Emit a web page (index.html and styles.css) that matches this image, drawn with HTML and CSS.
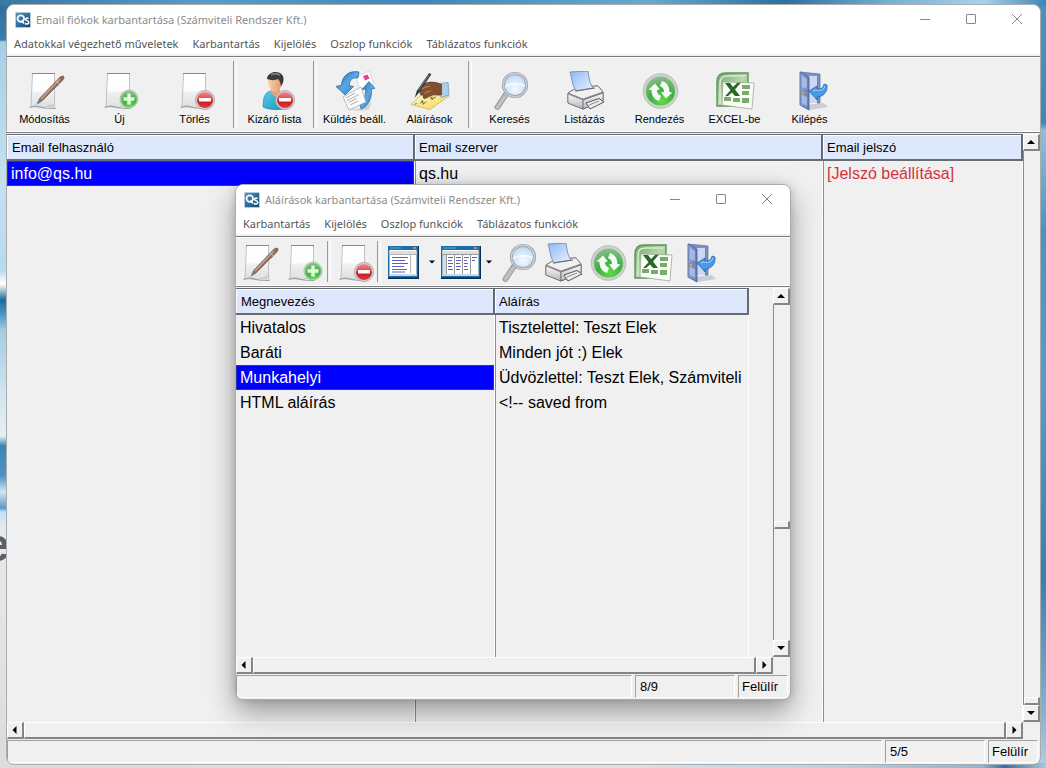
FILE: index.html
```html
<!DOCTYPE html>
<html lang="hu">
<head>
<meta charset="utf-8">
<meta name="viewport" content="width=device-width, initial-scale=1">
<title>Email fiókok karbantartása</title>
<link rel="stylesheet" href="styles.css">
</head>
<body>
<svg class="sprite" aria-hidden="true">
  <defs>
    <linearGradient id="g-page" x1="0" y1="0" x2="0" y2="1"><stop offset="0" stop-color="#fff"/><stop offset=".5" stop-color="#fdfdfd"/><stop offset=".55" stop-color="#f0f1f1"/><stop offset="1" stop-color="#dcdfe0"/></linearGradient>
    <linearGradient id="g-red" x1="0" y1="0" x2="0" y2="1"><stop offset="0" stop-color="#f08a8e"/><stop offset=".48" stop-color="#df3f47"/><stop offset=".52" stop-color="#cb1420"/><stop offset="1" stop-color="#e03a40"/></linearGradient>
    <radialGradient id="g-green" cx=".55" cy=".85" r=".85"><stop offset="0" stop-color="#5fdc4a"/><stop offset=".5" stop-color="#3fae40"/><stop offset="1" stop-color="#8fbf92"/></radialGradient>
    <linearGradient id="g-blue" x1="0" y1="0" x2="1" y2="1"><stop offset="0" stop-color="#1d67ad"/><stop offset=".5" stop-color="#5aa8e6"/><stop offset="1" stop-color="#2b76bd"/></linearGradient>
    <linearGradient id="g-shirt" x1="0" y1="0" x2="1" y2="1"><stop offset="0" stop-color="#58cbe8"/><stop offset="1" stop-color="#1791b8"/></linearGradient>
    <linearGradient id="g-skin" x1="0" y1="0" x2="1" y2="0"><stop offset="0" stop-color="#fbd3b0"/><stop offset="1" stop-color="#d99468"/></linearGradient>
    <radialGradient id="g-lens" cx=".5" cy=".65" r=".65"><stop offset="0" stop-color="#f4faff"/><stop offset="1" stop-color="#b9d6f5"/></radialGradient>
    <linearGradient id="g-sheet" x1="0" y1="0" x2="1" y2="1"><stop offset="0" stop-color="#8fb8f2"/><stop offset="1" stop-color="#eaf3ff"/></linearGradient>
    <linearGradient id="g-metal" x1="0" y1="0" x2="0" y2="1"><stop offset="0" stop-color="#fafafa"/><stop offset="1" stop-color="#b6b6ba"/></linearGradient>
    <linearGradient id="g-excel" x1="0" y1="0" x2="1" y2="1"><stop offset="0" stop-color="#6ea466"/><stop offset=".5" stop-color="#b7d8ad"/><stop offset="1" stop-color="#74a968"/></linearGradient>
    <linearGradient id="g-door" x1="0" y1="0" x2="1" y2="0"><stop offset="0" stop-color="#93a8d8"/><stop offset="1" stop-color="#5f7bba"/></linearGradient>
    <linearGradient id="g-note" x1="0" y1="0" x2="1" y2="1"><stop offset="0" stop-color="#fffbd0"/><stop offset="1" stop-color="#f3d44a"/></linearGradient>
    <linearGradient id="g-logo" x1="0" y1="0" x2="1" y2="1"><stop offset="0" stop-color="#4f9bc4"/><stop offset="1" stop-color="#0c4470"/></linearGradient>
  </defs>
  <symbol id="i-logo" viewBox="0 0 16 16">
    <rect x=".5" y=".5" width="15" height="15" rx="1" fill="url(#g-logo)" stroke="#b9cad6"/>
    <circle cx="5.8" cy="6.6" r="3.3" fill="none" stroke="#fff" stroke-width="1.700"/>
    <path d="M6.500 8.500l2.500 3" stroke="#fff" stroke-width="1.600"/>
    <path d="M13.600 6.600c-1.500-.9-3.200-.5-3.100.8.2 1.500 3.300 1 3.300 3 0 1.700-2.300 2-3.900 1.100" fill="none" stroke="#fff" stroke-width="1.500"/>
  </symbol>
  <symbol id="i-page" viewBox="0 0 40 40">
    <path d="M4.500 36l3-3V3h22v29l1.500 5-9-1.500z" fill="#c8cccf" opacity=".7"/>
    <path d="M7.500 2.500h22v31L19 36.500 6 35.500z" fill="url(#g-page)" stroke="#b3b7ba" stroke-width=".8"/>
    <path d="M7 2.500h23" stroke="#7e8284" stroke-width=".9"/>
    <path d="M4.500 36.500l6-1.500 9 2 11 .5" stroke="#989c9e" stroke-width="1.200" fill="none"/>
  </symbol>
  <symbol id="i-minus" viewBox="0 0 40 40">
    <circle cx="30" cy="29" r="9.500" fill="#d8d8d8" stroke="#9c9c9c" stroke-width=".8"/>
    <circle cx="30" cy="29" r="8" fill="url(#g-red)"/>
    <rect x="24" y="27" width="12" height="3.600" rx=".5" fill="#fff"/>
  </symbol>
  <symbol id="i-edit" viewBox="0 0 40 40">
    <use href="#i-page"/>
    <path d="M12.500 32.500l2-5L34 7c2-2 4.500-2.500 5-1.300S38.500 8.500 36.500 10.500L17 30z" fill="#8f6a59" stroke="#6a4b3e" stroke-width=".5"/>
    <path d="M16 28L35 8" stroke="#c9a999" stroke-width="1.300"/>
    <path d="M11.500 34l3-6.500 2.500 2.500z" fill="#777d82"/>
    <path d="M31 9.500l3.500 3.500M38.500 9l-6 7" stroke="#ddd0c9" stroke-width=".9"/>
  </symbol>
  <symbol id="i-new" viewBox="0 0 40 40">
    <use href="#i-page"/>
    <circle cx="29" cy="28" r="9" fill="#cfe4cc" stroke="#87b585" stroke-width=".7"/>
    <circle cx="29" cy="28" r="8" fill="url(#g-green)"/>
    <path d="M27.300 22.500h3.400v3.800h3.800v3.400h-3.800v3.800h-3.400v-3.800h-3.800v-3.400h3.800z" fill="#e2fbdc"/>
  </symbol>
  <symbol id="i-delete" viewBox="0 0 40 40"><use href="#i-page" x="1"/><use href="#i-minus"/></symbol>
  <symbol id="i-user" viewBox="0 0 40 40">
    <path d="M8 36c0-10 2-15 8-16l7 2 6-1c5 2 7 8 7 15-8 3.500-21 3.500-28 0z" fill="url(#g-shirt)" stroke="#1b86a7" stroke-width=".6"/>
    <path d="M16 18l8-1 2 5-6 4-5-5z" fill="#e3a47a"/>
    <path d="M13 8c0-4 3-6 7-6s8 3 7.500 8-3 10-7 11C16 21 12.500 14 13 8z" fill="url(#g-skin)"/>
    <path d="M12 8c0-3 3-6.500 7.500-7 5-.6 9.500 2.500 9 7.500-.1 3-1 5-2.500 6.500-.4-3-1-5-3-7-3 1.500-7 1.500-11 0z" fill="#3b3b3b"/>
    <path d="M16 4c3-2 7-1.500 9 .5" stroke="#858585" stroke-width="1.500" fill="none"/>
    <use href="#i-minus"/>
  </symbol>
  <symbol id="i-sync" viewBox="0 0 40 40">
    <path d="M10 36c8 3 20 3 27-6l-3 8c-8 3-18 2-24-2z" fill="#999" opacity=".35"/>
    <path d="M21 6l13-6 5 13-14 6z" fill="#fff" stroke="#c5c9cd" stroke-width=".7"/>
    <path d="M28 5l4.500-1.500 2 4-4.500 2z" fill="#e0458c"/>
    <path d="M24 1C14-1 7 5 6.500 14L1 15.500l9 8.500 8.500-8.500-4-.8C14 10 17 6 23 7z" fill="url(#g-blue)" stroke="#1c558f" stroke-width=".6"/>
    <path d="M26 38c8-3 11-11 10.500-20l3.500-.5-6-7-7 8 3.500-.5c.5 6-1 10-6 14z" fill="url(#g-blue)" stroke="#1c558f" stroke-width=".6"/>
    <path d="M8 26l18-10 5 15-17 8z" fill="#fafafa" stroke="#a5a5a5" stroke-width=".7"/>
    <path d="M11 27l9-5M12 29.500l12-6M13.500 31.500l8-4M15 34l8-4" stroke="#9c9c9c" stroke-width=".8"/>
  </symbol>
  <symbol id="i-sign" viewBox="0 0 42 40">
    <path d="M1 34l13-12 27 3-20 14.500z" fill="url(#g-note)" stroke="#c1a93e" stroke-width=".7"/>
    <path d="M11 33l2-3 1 4 3-3M21 28l2-2v3l4-3M5 34l2-1" stroke="#58533a" fill="none"/>
    <path d="M32 12l8-1 1 13-8 3c-3-4-3-10-1-15z" fill="#a9d0e8" stroke="#6c95ae" stroke-width=".7"/>
    <path d="M10 17c2-3 5-5 9-6 4-1 9 0 14 2v11c-5 1-8-1-11 1-3 1-5 3-7 3-2-1-1-3 0-4-3 1-5 0-4-2-2-1-2-3-1-5z" fill="#83502f" stroke="#4e2c18" stroke-width=".7"/>
    <path d="M12 18c3-2 6-3 9-3M15 23c2-2 5-3 7-3" stroke="#bd8459" fill="none" stroke-width="1.200"/>
    <path d="M20 1l2.500 1.500L10 21l-5 6 2-7z" fill="#333c43"/>
    <path d="M20 3L9 19" stroke="#8d989f" stroke-width=".8"/>
  </symbol>
  <symbol id="i-search" viewBox="0 0 40 40">
    <path d="M16.500 22.500L7.500 36" stroke="#8b8d8f" stroke-width="5.600" stroke-linecap="round"/>
    <path d="M16 23.500L7.500 36" stroke="#bdbfc1" stroke-width="4" stroke-linecap="round"/>
    <circle cx="25" cy="14" r="11.600" fill="url(#g-lens)" stroke="#989ca4" stroke-width="3"/>
    <circle cx="25" cy="14" r="11.600" fill="none" stroke="#cbced5" stroke-width="1.600"/>
    <path d="M15 16c4-4 14-4 20-1" stroke="#fff" stroke-width="2" opacity=".7" fill="none"/>
  </symbol>
  <symbol id="i-print" viewBox="0 0 40 40">
    <path d="M3 22l10-6 20-1 5 6v8L18 38 3 32z" fill="#a6a6ab" stroke="#626267"/>
    <path d="M3 22l10-6 20-1 5 6-20 7z" fill="#f1f1f3" stroke="#747479" stroke-width=".8"/>
    <path d="M5 1l18-1c1 8 2 13 5 17l-17 3C7 14 7 7 5 1z" fill="url(#g-sheet)" stroke="#687fa9" stroke-width=".8"/>
    <path d="M3 23l15 6v9L3 32z" fill="url(#g-metal)" stroke="#747479" stroke-width=".7"/>
    <path d="M18 29l20-7v8l-20 8z" fill="url(#g-metal)" stroke="#66666b" stroke-width=".8"/>
    <path d="M21 32l13-4.500 5 3.500-14 7z" fill="#eee" stroke="#55555a"/>
    <path d="M24 34l10-4" stroke="#8a8a8e"/>
    <path d="M10 20l20-3" stroke="#69696e" stroke-width="1.200"/>
  </symbol>
  <symbol id="i-refresh" viewBox="0 0 40 40">
    <circle cx="20.500" cy="20" r="17.300" fill="#cdd2cd" stroke="#b0b4b0" stroke-width=".8"/>
    <circle cx="20.500" cy="20" r="14.600" fill="url(#g-green)"/>
    <path d="M8.500 18.500l6.500-6 5 6-3 .5c0 3 1 4.500 4 6l-2 5c-5-1.500-7.500-5.500-7.500-11z" fill="#f4fbf3"/>
    <path d="M32.500 21.500l-6.500 6-5-6 3-.5c0-3-1-4.500-4-6l2-5c5 1.500 7.500 5.500 7.500 11z" fill="#f4fbf3"/>
  </symbol>
  <symbol id="i-excel" viewBox="0 0 40 40">
    <path d="M2 11C2 4 5 2 11 2h22v33H2z" fill="url(#g-excel)" stroke="#5c9357" stroke-width="1.400"/>
    <path d="M5 33V13c0-6 2-8 8-8h17" fill="none" stroke="#d6ead1" stroke-width="1.500"/>
    <path d="M8 11l31 1-2 26-30-4z" fill="#fbfdf9" stroke="#9aab96" stroke-width=".8"/>
    <path d="M27 14h8v4h-8zM27 20h7v4h-7zM27 27h7v5h-7zM18 27h7v4h-7zM9 26h7v4H9z" fill="#77ad68"/>
    <path d="M10 12h5l3 4 4-4 4-.5-6 7L25 25h-5l-3-3.500-4 3.500-3 .2 5.500-6z" fill="#2b662b"/>
  </symbol>
  <symbol id="i-exit" viewBox="0 0 40 40">
    <path d="M16 34l18-2 4 4-18 3z" fill="#a7acb8" opacity=".5"/>
    <path d="M10 1l20 2v29h-3V6H16z" fill="#7c91c4" stroke="#566ba2" stroke-width=".7"/>
    <path d="M16 5h11v27h-9z" fill="#cdd8f0"/>
    <path d="M10 1l9 5v33l-9-5z" fill="url(#g-door)" stroke="#465d98" stroke-width=".8"/>
    <path d="M12 5l5 3v10l-5-2zM12 24l5 2v9l-5-3z" fill="#b9c8ec" opacity=".7"/>
    <circle cx="13" cy="22" r="1.500" fill="#e7c14c" stroke="#826821" stroke-width=".5"/>
    <path d="M19 20l8-5v3c4 .5 6-1 7-5l3 1c1 7-4 12-10 12v3z" fill="#479ae6" stroke="#245e9f" stroke-width=".7"/>
    <path d="M23 20l3-1c5 1 8 0 9-4" stroke="#a9d6fb" fill="none"/>
  </symbol>
  <symbol id="i-form" viewBox="0 0 32 33">
    <path d="M0 0h31v33H0z" fill="#0b2b52"/><path d="M0 0h30v31.500H0z" fill="#1c6ea6"/>
    <path d="M1.500 4h27v26h-27z" fill="#fff"/><path d="M1.500 5h27v3h-27z" fill="#dcdde0"/>
    <path d="M2 2h11" stroke="#5aa9d8"/><path d="M25 1h3v2h-3z" fill="#e17a68"/>
    <path d="M1.500 8.500h27M22.500 8v19" stroke="#b5b5bb"/>
    <path d="M4 11.500h16M4 14.500h13M4 17.500h16M4 20.500h12M4 23.500h15M4 26h13" stroke="#5a5ec0" stroke-width="1.200"/>
    <path d="M1.500 28h27v2h-27z" fill="#c6dbe6"/>
  </symbol>
  <symbol id="i-grid" viewBox="0 0 40 33">
    <path d="M0 0h40v33H0z" fill="#0b2b52"/><path d="M0 0h39v31.500H0z" fill="#1c6ea6"/>
    <path d="M1.500 4h36v26h-36z" fill="#fff"/><path d="M1.500 5h36v3h-36zM2 8h3v20H2z" fill="#dcdde0"/>
    <path d="M2 2h13" stroke="#5aa9d8"/><path d="M33 1h3v2h-3z" fill="#e17a68"/>
    <path d="M1.500 8.500h36M5.500 8v20M13.500 8v20M21.500 8v20M29.500 8v20" stroke="#97979f"/>
    <path d="M7 11.500h5M7 14.500h4M7 17.500h5M7 20.500h4M7 23.500h5M15 11.500h5M15 14.500h5M15 17.500h4M15 20.500h5M15 23.500h4M23 11.500h5M23 14.500h3M23 17.500h4M23 20.500h3M23 23.500h4M31 11.500h5M31 14.500h3" stroke="#5a5ec0" stroke-width="1.200"/>
    <path d="M1.500 28h36v2h-36z" fill="#c6dbe6"/>
  </symbol>
  <symbol id="i-min" viewBox="0 0 12 12"><path d="M1 5.500h10" stroke="#858585"/></symbol>
  <symbol id="i-max" viewBox="0 0 12 12"><rect x="1.500" y=".5" width="9" height="9" rx=".5" fill="none" stroke="#858585"/></symbol>
  <symbol id="i-close" viewBox="0 0 12 12"><path d="M1 0l10 10M11 0L1 10" stroke="#858585"/></symbol>
  <symbol id="i-up" viewBox="0 0 8 8"><path d="M0 6h8L4 2z"/></symbol>
  <symbol id="i-down" viewBox="0 0 8 8"><path d="M0 2h8L4 6z"/></symbol>
  <symbol id="i-left" viewBox="0 0 8 8"><path d="M5.500 0v8l-4-4z"/></symbol>
  <symbol id="i-right" viewBox="0 0 8 8"><path d="M2.500 0v8l4-4z"/></symbol>
</svg>

<div class="wallpaper" aria-hidden="true"><span class="wallpaper-word">e</span></div>

<main class="window window-main">
  <header class="titlebar">
    <svg class="logo"><use href="#i-logo"/></svg>
    <h1 class="title">Email fiókok karbantartása (Számviteli Rendszer Kft.)</h1>
    <div class="controls">
      <button aria-label="Kis méret"><svg><use href="#i-min"/></svg></button>
      <button aria-label="Teljes méret"><svg><use href="#i-max"/></svg></button>
      <button aria-label="Bezárás"><svg><use href="#i-close"/></svg></button>
    </div>
  </header>
  <nav class="menu">
    <button>Adatokkal végezhető műveletek</button>
    <button>Karbantartás</button>
    <button>Kijelölés</button>
    <button>Oszlop funkciók</button>
    <button>Táblázatos funkciók</button>
  </nav>
  <div class="toolbar" role="toolbar" aria-label="Email fiókok">
    <button class="tool"><svg><use href="#i-edit"/></svg>Módosítás</button>
    <button class="tool"><svg><use href="#i-new"/></svg>Új</button>
    <button class="tool"><svg><use href="#i-delete"/></svg>Törlés</button>
    <span class="sep"></span>
    <button class="tool"><svg><use href="#i-user"/></svg>Kizáró lista</button>
    <span class="sep"></span>
    <button class="tool"><svg><use href="#i-sync"/></svg>Küldés beáll.</button>
    <button class="tool"><svg><use href="#i-sign"/></svg>Aláírások</button>
    <span class="sep"></span>
    <button class="tool"><svg><use href="#i-search"/></svg>Keresés</button>
    <button class="tool"><svg><use href="#i-print"/></svg>Listázás</button>
    <button class="tool"><svg><use href="#i-refresh"/></svg>Rendezés</button>
    <button class="tool"><svg><use href="#i-excel"/></svg>EXCEL-be</button>
    <button class="tool"><svg><use href="#i-exit"/></svg>Kilépés</button>
  </div>
  <section class="browse">
    <div class="sheet">
      <table class="grid">
        <colgroup><col><col><col class="col-password"></colgroup>
        <thead><tr><th scope="col">Email felhasználó</th><th scope="col">Email szerver</th><th scope="col">Email jelszó</th></tr></thead>
        <tbody>
          <tr><td class="selected">info@qs.hu</td><td>qs.hu</td><td class="secret">[Jelszó beállítása]</td></tr>
          <tr class="filler"><td></td><td></td><td></td></tr>
        </tbody>
      </table>
    </div>
    <div class="scroll scroll-v">
      <button class="arrow" aria-label="Fel"><svg><use href="#i-up"/></svg></button>
      <div class="track"><div class="thumb"></div></div>
      <button class="arrow" aria-label="Le"><svg><use href="#i-down"/></svg></button>
    </div>
    <div class="scroll scroll-h">
      <button class="arrow" aria-label="Balra"><svg><use href="#i-left"/></svg></button>
      <div class="track"><div class="thumb"></div></div>
      <button class="arrow" aria-label="Jobbra"><svg><use href="#i-right"/></svg></button>
    </div>
  </section>
  <footer class="status">
    <div class="panel panel-text"></div>
    <div class="panel panel-count">5/5</div>
    <div class="panel panel-mode">Felülír</div>
  </footer>
</main>

<div class="window window-dialog" role="dialog" aria-labelledby="dialog-title">
  <header class="titlebar">
    <svg class="logo"><use href="#i-logo"/></svg>
    <h2 class="title" id="dialog-title">Aláírások karbantartása (Számviteli Rendszer Kft.)</h2>
    <div class="controls">
      <button aria-label="Kis méret"><svg><use href="#i-min"/></svg></button>
      <button aria-label="Teljes méret"><svg><use href="#i-max"/></svg></button>
      <button aria-label="Bezárás"><svg><use href="#i-close"/></svg></button>
    </div>
  </header>
  <nav class="menu">
    <button>Karbantartás</button>
    <button>Kijelölés</button>
    <button>Oszlop funkciók</button>
    <button>Táblázatos funkciók</button>
  </nav>
  <div class="toolbar toolbar-compact" role="toolbar" aria-label="Aláírások">
    <button class="tool" aria-label="Módosítás"><svg><use href="#i-edit"/></svg></button>
    <button class="tool" aria-label="Új"><svg><use href="#i-new"/></svg></button>
    <span class="sep"></span>
    <button class="tool" aria-label="Törlés"><svg><use href="#i-delete"/></svg></button>
    <span class="sep"></span>
    <button class="tool" aria-label="Űrlap nézet"><svg class="view"><use href="#i-form"/></svg></button>
    <button class="drop" aria-label="Űrlap nézetek"><svg><use href="#i-down"/></svg></button>
    <button class="tool" aria-label="Táblázat nézet"><svg class="view"><use href="#i-grid"/></svg></button>
    <button class="drop" aria-label="Táblázat nézetek"><svg><use href="#i-down"/></svg></button>
    <button class="tool" aria-label="Keresés"><svg><use href="#i-search"/></svg></button>
    <button class="tool" aria-label="Listázás"><svg><use href="#i-print"/></svg></button>
    <button class="tool" aria-label="Rendezés"><svg><use href="#i-refresh"/></svg></button>
    <button class="tool" aria-label="EXCEL-be"><svg><use href="#i-excel"/></svg></button>
    <button class="tool" aria-label="Kilépés"><svg><use href="#i-exit"/></svg></button>
  </div>
  <section class="browse">
    <div class="sheet">
      <table class="grid">
        <colgroup><col class="col-name"><col></colgroup>
        <thead><tr><th scope="col">Megnevezés</th><th scope="col">Aláírás</th></tr></thead>
        <tbody>
          <tr><td>Hivatalos</td><td>Tisztelettel: Teszt Elek</td></tr>
          <tr><td>Baráti</td><td>Minden jót :) Elek</td></tr>
          <tr><td class="selected">Munkahelyi</td><td>Üdvözlettel: Teszt Elek, Számviteli</td></tr>
          <tr><td>HTML aláírás</td><td>&lt;!-- saved from</td></tr>
          <tr class="filler"><td></td><td></td></tr>
        </tbody>
      </table>
    </div>
    <div class="scroll scroll-v">
      <button class="arrow" aria-label="Fel"><svg><use href="#i-up"/></svg></button>
      <div class="track"><div class="thumb"></div></div>
      <button class="arrow" aria-label="Le"><svg><use href="#i-down"/></svg></button>
    </div>
    <div class="scroll scroll-h">
      <button class="arrow" aria-label="Balra"><svg><use href="#i-left"/></svg></button>
      <div class="track"><div class="thumb"></div></div>
      <button class="arrow" aria-label="Jobbra"><svg><use href="#i-right"/></svg></button>
    </div>
  </section>
  <footer class="status">
    <div class="panel panel-text"></div>
    <div class="panel panel-count">8/9</div>
    <div class="panel panel-mode">Felülír</div>
  </footer>
</div>
</body>
</html>
```

FILE: styles.css
```css
:root {
  --face: #f0f0f0;
  --shade: #a0a0a0;
  --header: #dde8fd;
}

* { box-sizing: border-box; }

body {
  margin: 0;
  min-height: 100vh;
  overflow: hidden;
  font-family: "Liberation Sans", Arial, sans-serif;
  font-size: 13px;
  color: #000;
}

button {
  margin: 0;
  padding: 0;
  border: 0;
  background: none;
  font: inherit;
  color: inherit;
}

svg { display: block; flex: none; }

.sprite { position: absolute; width: 0; height: 0; }

/* Desktop */
.wallpaper {
  position: absolute;
  inset: 0;
  overflow: hidden;
  background:
    linear-gradient(90deg, #3a78a3, #5b9cc6 20%, #3f87b8 40%, #6aa9cd 62%, #2f6f9c 75%, #76b0d2 85%, #a9d3ea 94%, #3d86b4) top / 100% 6px no-repeat,
    linear-gradient(90deg, #dcdcdc, #dde1e5 60%, #b9d0e2 80%, #8fb4d0 94%, #2d6fa8 96%, #a9c6dc) bottom / 100% 5px no-repeat,
    linear-gradient(180deg, #4a91bd 0, #4a91bd 5%, #3f87b5 16%, #8fc0db 17%, #4b93be 30%, #5a9cc5 50%, #3a7fae 75%, #7fb0d0 92%, #b5cee0) right / 8px 100% no-repeat,
    linear-gradient(180deg, #2f6c98 0, #3a7fae 40px, #a5cfe6 42px, #c6e0ef 180px, #b8daee 270px, #fff 284px, #1f6aa0 300px, #4b94c4 314px, #a3cce4 330px, #d6e6f0 400px, #e9eff3 436px, #3b83b8 446px, #4f93c3 476px, #d3e5f2 492px, #5d97c4 508px, #c9e0f3 512px, #e9e9e9 530px, #dcdcdc);
}

.wallpaper-word {
  position: absolute;
  left: -16px;
  top: 520px;
  font: bold 46px/50px "Liberation Sans", Arial, sans-serif;
  color: #5b5f63;
}

/* Windows */
.window {
  position: absolute;
  display: flex;
  flex-direction: column;
  overflow: hidden;
  border: 1px solid #a9adb0;
  border-radius: 8px;
  background: var(--face);
}

.window-main { inset: 4px 5px 3px 6px; }

.window-dialog {
  inset: 184px 255px 68px 235px;
  box-shadow: 0 12px 28px rgba(0, 0, 0, .36), 0 0 8px rgba(0, 0, 0, .14);
}

.titlebar {
  display: flex;
  align-items: center;
  height: 29px;
  padding-left: 8px;
  gap: 5px;
  background: #fff;
}

.logo { width: 16px; height: 16px; }

.title {
  flex: 1;
  margin: 0;
  font: 400 11px/16px "Noto Sans", "Open Sans", sans-serif;
  color: #8c8c8c;
  white-space: nowrap;
}

.controls { display: flex; }

.controls button {
  display: grid;
  place-items: center;
  width: 46px;
  height: 28px;
}

.controls svg { width: 12px; height: 12px; }

.menu {
  display: flex;
  gap: 14px;
  height: 22px;
  padding: 0 7px;
  background: #fff;
  border-bottom: 2px solid var(--face);
  font: 400 11px/20px "Noto Sans", "Open Sans", sans-serif;
  color: #555;
  white-space: nowrap;
}

/* Toolbars */
.toolbar {
  display: flex;
  height: 77px;
  border-top: 1px solid #7c7c7c;
  border-bottom: 1px solid #7c7c7c;
  box-shadow: inset 0 1px #fff, inset 0 -1px #fff;
}

.tool {
  display: flex;
  flex-direction: column;
  align-items: center;
  width: 75px;
  padding-top: 14px;
  font-size: 11px;
  line-height: 17px;
  white-space: nowrap;
}

.tool svg { width: 40px; height: 40px; }

.sep { width: 5px; padding: 4px 1px; }

.sep::before {
  content: "";
  display: block;
  width: 2px;
  height: 100%;
  border-left: 1px solid #9a9a9a;
  border-right: 1px solid #fff;
}

.toolbar-compact { height: 51px; }

.toolbar-compact .tool {
  justify-content: center;
  width: 45px;
  padding-top: 2px;
}

.toolbar-compact .view { width: 40px; height: 33px; }

.drop { width: 12px; padding-left: 3px; }

.drop svg { width: 6px; height: 6px; }

/* Browse area */
.browse {
  flex: 1;
  display: grid;
  grid-template-columns: minmax(0, 1fr) 17px;
  grid-template-rows: minmax(0, 1fr) 17px;
  min-height: 0;
  padding-top: 1px;
}

.sheet { min-height: 0; overflow: hidden; }

.window-dialog .sheet { padding-right: 24px; }

.grid {
  width: 100%;
  height: 100%;
  table-layout: fixed;
  border-collapse: separate;
  border-spacing: 0;
}

.col-password { width: 200px; }
.col-name { width: 259px; }

.grid th {
  height: 27px;
  padding: 0 5px;
  border: solid #666b72;
  border-width: 1px 2px 2px 0;
  background: var(--header);
  box-shadow: inset 1px 1px #fff;
  font-size: 13px;
  font-weight: 400;
  text-align: left;
}

.grid th + th { padding-left: 4px; }

.grid td {
  height: 25px;
  padding: 0 3px;
  border-right: 1px solid #fff;
  font-size: 16px;
  line-height: 25px;
  white-space: nowrap;
  overflow: hidden;
}

.grid td:first-child { padding-left: 4px; }

.grid td + td { border-left: 1px solid #8e8e8e; }

.grid .selected {
  background: #00f;
  box-shadow: inset 0 0 0 1px #2a36a8;
  color: #fff;
}

.grid .secret { color: #d6323c; }

.grid .filler td { height: auto; }

/* Scroll bars */
.scroll { display: flex; }

.scroll-v { flex-direction: column; }

.arrow {
  display: grid;
  place-items: center;
  flex: none;
  width: 17px;
  height: 17px;
}

.arrow, .thumb {
  border: 1px solid #fff;
  border-right: 2px solid #858585;
  border-bottom: 2px solid #858585;
  background: var(--face);
}

.arrow svg { width: 8px; height: 8px; }

.track { flex: 1; display: flex; }

.scroll-v .track {
  flex-direction: column;
  justify-content: flex-end;
  border-left: 1px solid #8a8a8a;
}

.scroll-v .thumb { height: 8px; }

.window-dialog .scroll-v .thumb { margin-bottom: 111px; }

.scroll-h .thumb { flex: 1; }

/* Status bar */
.status {
  display: flex;
  gap: 3px;
  height: 25px;
  padding: 1px 2px 1px 0;
}

.panel {
  padding: 0 4px;
  border: 1px solid;
  border-color: var(--shade) #fff #fff var(--shade);
  line-height: 22px;
}

.panel-text { flex: 1; }
.panel-count { width: 100px; }
.panel-mode { width: 50px; padding-left: 3px; }
```
